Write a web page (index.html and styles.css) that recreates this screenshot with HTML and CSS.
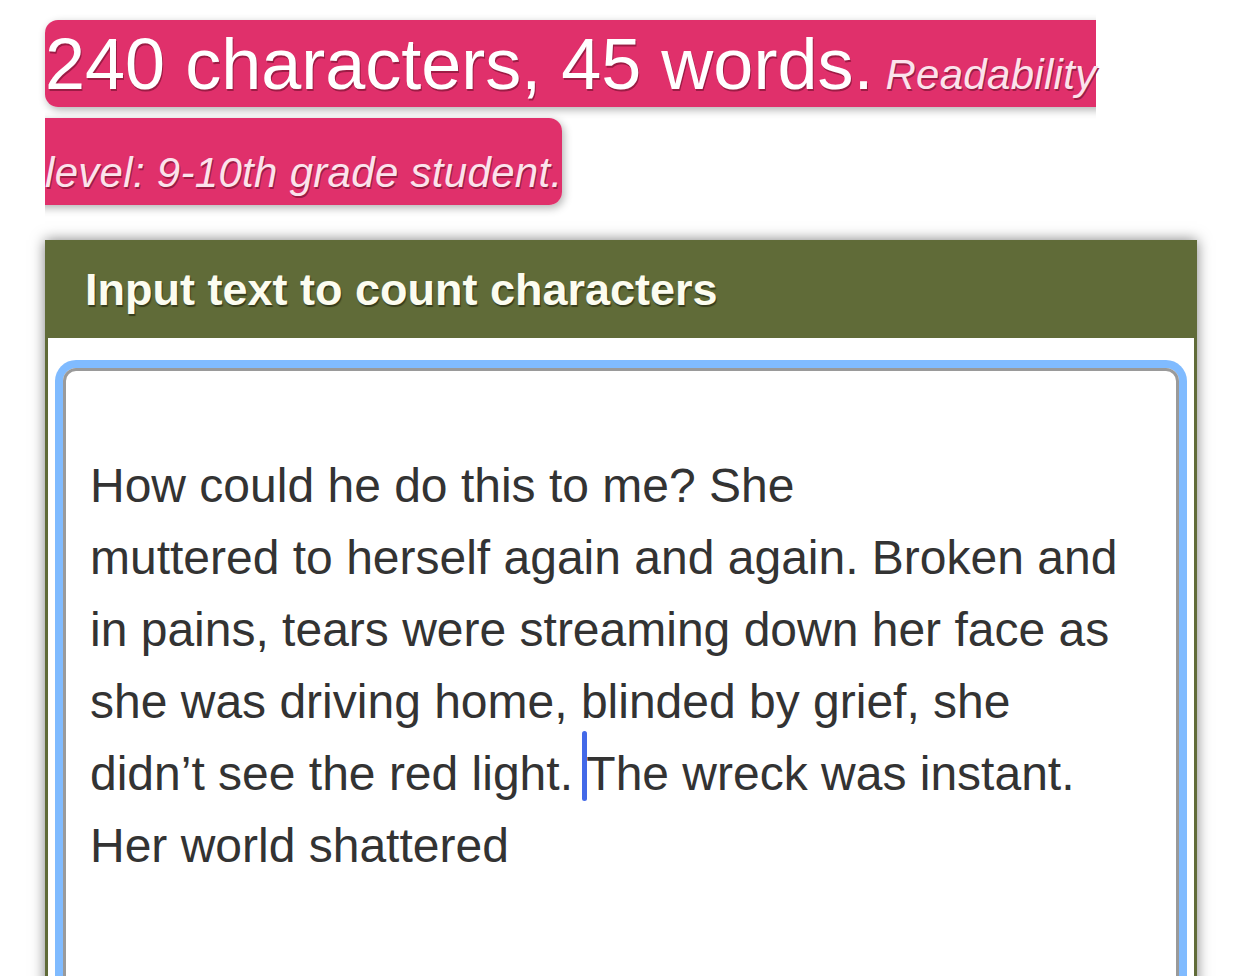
FILE: index.html
```html
<!DOCTYPE html>
<html>
<head>
  <meta charset="utf-8">
  <meta name="viewport" content="width=device-width, initial-scale=1.0"/>
  <title>Character Counter</title>
  <link rel="stylesheet" href="styles.css">
</head>
<body>

  <div class="page">
    <h1 class="stats">
      <span class="stats-box">240 characters, 45 words.<em class="level"> Readability<br>level: 9-10th grade student.</em></span>
    </h1>

    <div class="card">
      <div class="card-header">Input text to count characters</div>
      <div class="card-body">
        <div class="text-input">
          <br>
          How could he do this to me? She<br>
          muttered to herself again and again. Broken and<br>
          in pains, tears were streaming down her face as<br>
          she was driving home, blinded by grief, she<br>
          didn’t see the red light. <span class="caret"></span>The wreck was instant.<br>
          Her world shattered
        </div>
      </div>
    </div>
  </div>

</body>
</html>
```

FILE: styles.css
```css
body {
  margin: 0;
  padding: 0;
  background: #fff;
  font-family: "Liberation Sans", Arial, Helvetica, sans-serif;
}
.page {
  padding: 15px 45px 0;
}
.stats {
  margin: 0;
  font-size: 72px;
  font-weight: normal;
  line-height: 98px;
  color: #fff;
}
.stats-box {
  background: #e0306b;
  padding: 4px 0 3px;
  border-radius: 13px;
  box-shadow: 2px 3px 8px rgba(0,0,0,0.3);
  text-shadow: 1px 2px 0 #9c1c45;
}
.level {
  font-size: 42px;
  line-height: 1;
  letter-spacing: 0.3px;
  color: #fbe3ec;
}
.card {
  margin-top: 29px;
  border: 3px solid #606b38;
  border-top: 0;
  background: #fff;
  box-shadow: 0 0 13px rgba(0,0,0,0.5);
}
.card-header {
  background: #606b38;
  color: #fcfcf0;
  font-size: 45px;
  font-weight: bold;
  line-height: 94px;
  padding: 3px 0 1px 37px;
  text-shadow: 1px 2px 1px #363c1c;
}
.card-body {
  padding: 30px 15px 15px;
}
.text-input {
  min-height: 700px;
  border: 3px solid #9a9a9a;
  border-radius: 13px;
  box-shadow: 0 0 0 8px #80bbff;
  padding: 7px 24px;
  font-size: 48px;
  line-height: 72px;
  color: #333;
  white-space: nowrap;
}
.caret {
  position: relative;
}
.caret::after {
  content: "";
  position: absolute;
  left: -4px;
  top: -16px;
  width: 5px;
  height: 70px;
  border-radius: 3px;
  background: #4369e8;
}
```
